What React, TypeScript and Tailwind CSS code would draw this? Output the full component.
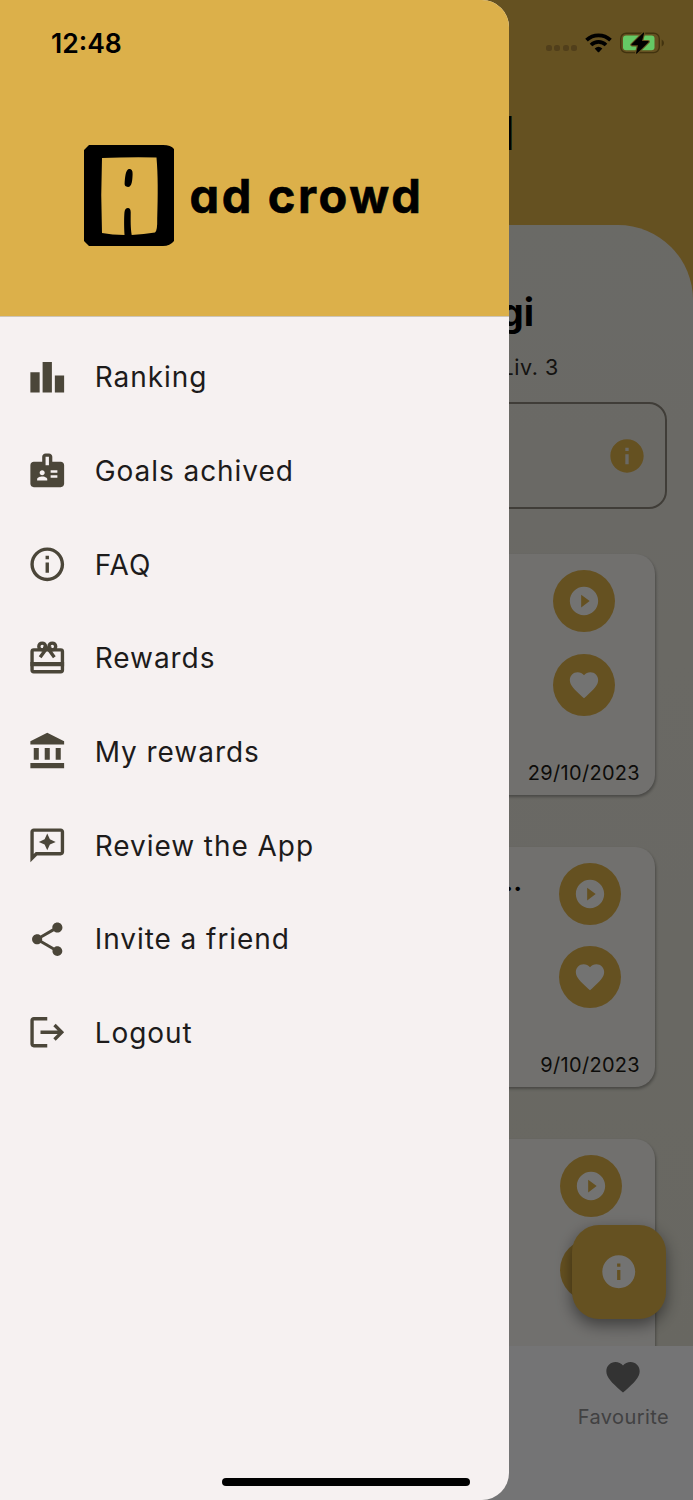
import type { ReactNode } from 'react'
import type { IconType } from 'react-icons'
import {
    MdBadge,
    MdFavorite,
    MdInfo,
    MdInfoOutline,
    MdLeaderboard,
    MdLogout,
    MdOutlineReviews,
    MdPlayCircleFilled,
    MdShare,
} from 'react-icons/md'

const ICON_CLASS = 'size-[40.5px] shrink-0 text-[#4b4639]'

function BankIcon({ className }: { className?: string }) {
    return (
        <svg viewBox="0 0 24 24" fill="currentColor" className={className}>
            <path d="M4 10h3v7H4zM10.5 10h3v7h-3zM2 19h20v3H2zM17 10h3v7h-3zM12 1 2 6v2h20V6z" />
        </svg>
    )
}

function GiftCardIcon({ className }: { className?: string }) {
    return (
        <svg viewBox="0 0 24 24" fill="none" stroke="currentColor" strokeWidth="2" className={className}>
            <rect x="3" y="7" width="18" height="13" rx="1" />
            <path d="M2 15.500h20" strokeWidth="2.500" />
            <circle cx="9" cy="5" r="2" />
            <circle cx="15" cy="5" r="2" />
            <path d="M12 5.700 7.800 11.400M12 5.700l4.200 5.700" />
            <path d="M9.500 6h5" />
        </svg>
    )
}

const menuItems: { label: string; icon: IconType | typeof BankIcon }[] = [
    { label: 'Ranking', icon: MdLeaderboard },
    { label: 'Goals achived', icon: MdBadge },
    { label: 'FAQ', icon: MdInfoOutline },
    { label: 'Rewards', icon: GiftCardIcon },
    { label: 'My rewards', icon: BankIcon },
    { label: 'Review the App', icon: MdOutlineReviews },
    { label: 'Invite a friend', icon: MdShare },
    { label: 'Logout', icon: MdLogout },
]

const cards: { title?: string; date?: string }[] = [
    { date: '29/10/2023' },
    { title: '..', date: '9/10/2023' },
    {},
]

function Logo() {
    return (
        <svg viewBox="0 0 90 101" className="h-[101px] w-[90px] shrink-0">
            <path
                fillRule="evenodd"
                d="M5 0H79Q87 0 90 4V96Q86 101 79 101H5L0 96V5ZM18 13Q16.500 50 18 88Q28 90 40.500 90C40 80 40 72 40.500 67Q41 63 44 63Q46.500 63 46.700 67C46.700 76 46.500 82 47.700 90Q60 89 71 87.500Q73.500 86 73.200 74C74 50 74 30 72.500 12.500Q45 12 18 13ZM44.700 24Q48.800 23.500 48.600 29C48.400 35 48 42 44 42Q40.300 41.500 40.600 38.500C41 33 41.500 25 44.700 24Z"
            />
        </svg>
    )
}

function RoundButton({ children }: { children: ReactNode }) {
    return (
        <div className="flex size-[62px] items-center justify-center rounded-full bg-[#dcb048] text-[#fbfaf9]">
            {children}
        </div>
    )
}

function VideoCard({ title, date }: { title?: string; date?: string }) {
    return (
        <div className="flex h-[240.5px] shrink-0 justify-between rounded-[20px] bg-[#f6f4f0] pt-4 pr-[15px] shadow-[1px_2px_3px_rgba(0,0,0,0.3)]">
            <div className="flex-1 pt-[6px] pr-[18px] text-right text-[24px] leading-7 font-extrabold tracking-[0.5px] text-black">
                {title}
            </div>
            <div className="flex min-w-[99px] flex-col items-center">
                <RoundButton>
                    <MdPlayCircleFilled className="size-[34px]" />
                </RoundButton>
                <div className="h-[21.500px]" />
                <RoundButton>
                    <MdFavorite className="size-[34px]" />
                </RoundButton>
                {date && (
                    <span className="mt-[45px] text-[20px] leading-6 tracking-[0.3px] text-[#1d1b16]">
                        {date}
                    </span>
                )}
            </div>
        </div>
    )
}

function HomeScreen() {
    return (
        <div className="flex h-full flex-col bg-[#dcb048]">
            <div className="h-[225px] shrink-0 pt-[108px] pr-[178.500px] text-right text-[46px] leading-[50px] font-semibold text-black">
                l
            </div>
            <main className="flex min-h-0 flex-1 flex-col overflow-hidden rounded-tr-[75px] bg-linear-to-b from-[#e8e6df] to-[#e3e1d4]">
                <h1 className="mt-[64px] pr-[159px] text-right text-[38px] leading-[46px] font-bold text-black">
                    gi
                </h1>
                <p className="mt-[18px] pr-[134px] text-right text-[21.500px] leading-7 tracking-[0.6px] text-[#2d2b26]">
                    Liv. 3
                </p>
                <div className="mt-[21px] mr-[26px] ml-[26px] flex h-[107px] shrink-0 items-center justify-end rounded-[18px] border-[2px] border-[#8b867a] pr-[18px]">
                    <MdInfo className="size-[40px] text-[#dcb048]" />
                </div>
                <div className="mt-[45px] mr-[38px] ml-[38px] flex flex-col gap-[52px]">
                    {cards.map((card, index) => (
                        <VideoCard key={index} title={card.title} date={card.date} />
                    ))}
                </div>
            </main>
            <nav className="flex h-[154.500px] shrink-0 justify-end bg-[#fcfcff] pt-[11px] pr-[24px]">
                <div className="flex flex-col items-center">
                    <MdFavorite className="size-[40px] text-[#6f6f6f]" />
                    <span className="mt-[8px] text-[20px] leading-6 tracking-[0.4px] text-[#8f8e90]">
                        Favourite
                    </span>
                </div>
            </nav>
        </div>
    )
}

function StatusIcons() {
    return (
        <div className="flex items-center">
            <div className="mt-[11px] flex gap-[2.400px]">
                {[0, 1, 2, 3].map((dot) => (
                    <span key={dot} className="size-[6px] rounded-[2.500px] bg-[#513f1b]" />
                ))}
            </div>
            <svg viewBox="0 0 27 20" className="ml-[8px] h-[20px] w-[27px]">
                <g fill="none" stroke="#000" strokeWidth="3.700">
                    <path d="M1.500 7.200A17.300 17.300 0 0 1 25.500 7.200" />
                    <path d="M6 12A10.800 10.800 0 0 1 21 12" />
                </g>
                <path d="M9.700 15.500A5.700 5.700 0 0 1 17.300 15.500L14.200 19Q13.500 19.600 12.800 19Z" />
            </svg>
            <svg viewBox="0 0 45 22" className="ml-[8px] h-[22px] w-[45px]">
                <rect x="0.700" y="1.200" width="38.600" height="19.400" rx="5.500" fill="none" stroke="#42330f" strokeWidth="1.400" />
                <path d="M41.700 7.500Q44 8.500 44 11Q44 13.500 41.700 14.500Z" fill="#42330f" />
                <rect x="3" y="3.500" width="31.500" height="14.800" rx="3" fill="#65c965" />
                <path
                    d="M23.500 .5 11.500 12.300Q11 13.200 12 13.300H18L16 21.300Q16.200 22 17 21.500L28.700 10Q29 9 28 9H22L24.200 1Q24.200 .2 23.500 .5Z"
                    stroke="#65511f"
                    strokeWidth="2.200"
                    paintOrder="stroke"
                />
            </svg>
        </div>
    )
}

function Drawer() {
    return (
        <aside className="absolute inset-y-0 left-0 w-[508.500px] overflow-hidden rounded-r-[27px] bg-[#f6f1f1]">
            <div className="flex h-[316.500px] items-center border-b-[1.500px] border-[#cdc5b8] bg-[#dcb04a] pt-[75px] pl-[84px]">
                <Logo />
                <span className="ml-[15.500px] pt-px text-[47px] leading-[56px] font-bold tracking-[2.6px] text-black [-webkit-text-stroke:0.6px_black] [font-feature-settings:'cv11']">
                    ad crowd
                </span>
            </div>
            <ul className="pt-[13.500px]">
                {menuItems.map(({ label, icon: Icon }) => (
                    <li key={label} className="flex h-[93.700px] items-center pl-[26.700px]">
                        <Icon className={ICON_CLASS} />
                        <span className="ml-[27.500px] pt-px text-[28px] leading-9 tracking-[0.95px] text-[#1d1b1b]">
                            {label}
                        </span>
                    </li>
                ))}
            </ul>
        </aside>
    )
}

function App() {
    return (
        <div className="relative h-[1500px] w-[693px] overflow-hidden font-['Inter',sans-serif]">
            <HomeScreen />
            <button className="absolute top-[1225px] left-[572px] flex size-[94px] items-center justify-center rounded-[27px] bg-[#dcb048] text-[#fbfaf9] shadow-[0_6px_16px_rgba(0,0,0,0.45)]">
                <MdInfo className="size-[39.500px]" />
            </button>
            <div className="absolute inset-0 bg-black/54" />
            <Drawer />
            <header className="absolute inset-x-0 top-0 flex justify-between pt-[26px] pr-[28px] pl-[51px]">
                <span className="pt-px text-[26.500px] leading-8 font-semibold text-black">12:48</span>
                <StatusIcons />
            </header>
            <div className="absolute bottom-[14px] left-[222px] h-[8.500px] w-[248px] rounded-full bg-black" />
        </div>
    )
}

export default App
